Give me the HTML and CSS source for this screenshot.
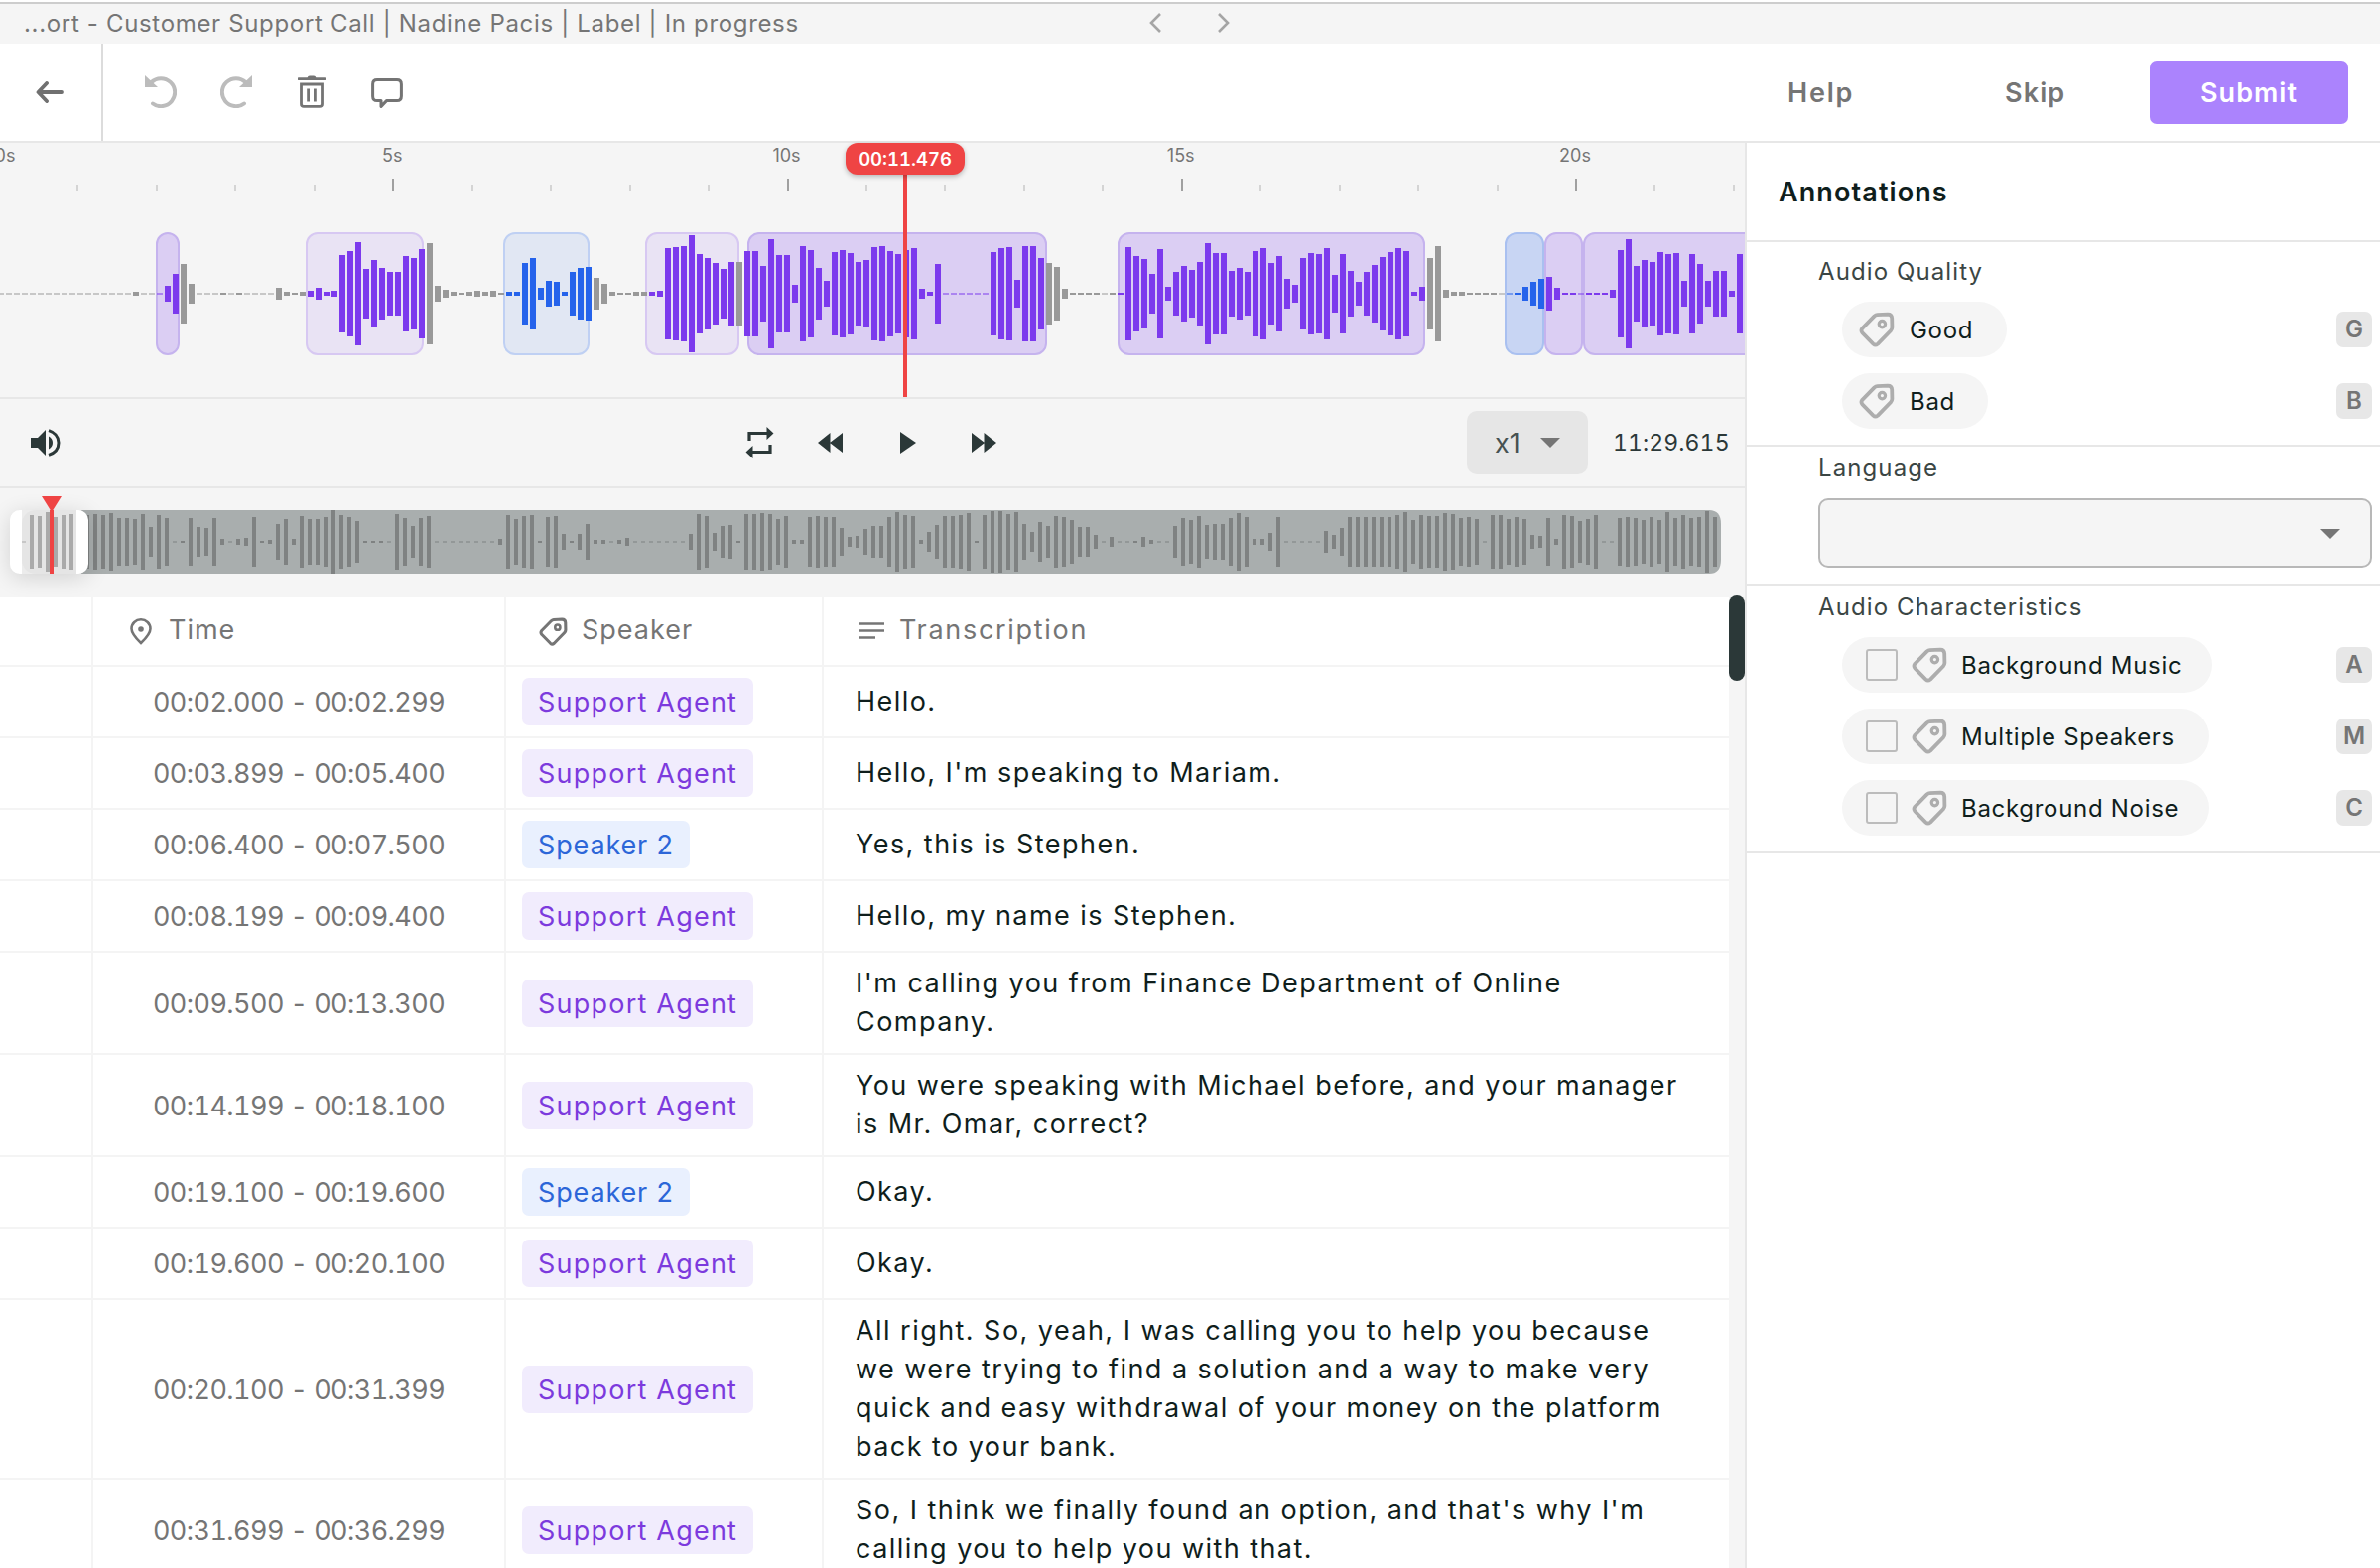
FILE: index.html
```html
<!DOCTYPE html>
<html lang="en">
  <head>
    <meta charset="utf-8" />
    <title>Customer Support Call</title>
    <link rel="stylesheet" href="styles.css">
  </head>
  <body>
    <svg class="symbols" width="0" height="0">
      <symbol id="tag" viewBox="0 0 36 36">
        <path d="M18.5 3.2 L29 2.6 Q33 2.6 33.2 6.5 L33.4 16 Q33.3 17.8 32 19.2 L19 32.6 Q16.6 34.6 14.4 32.6 L3.4 21.4 Q1.6 19 3.4 16.8 L15.6 4.4 Q16.9 3.3 18.5 3.2 Z" fill="none" stroke="currentColor" stroke-width="3.8" stroke-linejoin="round" />
        <circle cx="23.4" cy="12.6" r="3.2" fill="none" stroke="currentColor" stroke-width="3.2" />
      </symbol>
    </svg>

    <div class="titlebar">
      <span class="titlebar-text">...ort - Customer Support Call | Nadine Pacis | Label | In progress</span>
      <svg class="chevrons" width="86" height="24" viewBox="0 0 86 24">
        <path d="M13 3 L4 12 L13 21 M72 3 L81 12 L72 21" />
      </svg>
    </div>

    <header class="toolbar">
      <div class="back">
        <svg width="28" height="22" viewBox="0 0 28 22"><path d="M26 11 H3 M11 2 L2.5 11 L11 20" /></svg>
      </div>
      <div class="tools">
        <svg class="muted" width="32" height="33" viewBox="0 0 32 33">
          <path d="M8 28.5 A14 14 0 1 0 6.5 7" fill="none" stroke="currentColor" stroke-width="4" stroke-linecap="round" />
          <path d="M0 0 V12 H13 Z" fill="currentColor" />
        </svg>
        <svg class="muted" width="32" height="33" viewBox="0 0 32 33">
          <path d="M24 28.5 A14 14 0 1 1 25.5 7" fill="none" stroke="currentColor" stroke-width="4" stroke-linecap="round" />
          <path d="M32 0 V12 H19 Z" fill="currentColor" />
        </svg>
        <svg class="trash" width="28" height="33" viewBox="0 0 28 33">
          <path d="M1 3.6 H27 M3.5 9 H24.5 V29 Q24.5 31.4 22 31.4 H6 Q3.5 31.4 3.5 29 Z" fill="none" stroke="currentColor" stroke-width="2.8" stroke-linecap="round" />
          <path d="M9.5 3 Q10 0.6 12 0.6 H16 Q18 0.6 18.5 3 Z" fill="currentColor" />
          <path d="M10.6 13.5 V26.5 M17.4 13.5 V26.5" stroke="currentColor" stroke-width="2.8" />
        </svg>
        <svg class="comment" width="32" height="31" viewBox="0 0 32 31">
          <path d="M6 1.6 H26 Q30.4 1.6 30.4 6 V18 Q30.4 22.6 26 22.6 H15.5 L10 28.4 V22.6 H6 Q1.6 22.6 1.6 18 V6 Q1.6 1.6 6 1.6 Z" fill="none" stroke="currentColor" stroke-width="3" stroke-linejoin="round" />
        </svg>
      </div>
      <nav class="actions">
        <a class="link help">Help</a>
        <a class="link skip">Skip</a>
        <button class="submit">Submit</button>
      </nav>
    </header>

    <div class="content">
      <main class="editor">
        <section class="wave">
          <svg id="wave" width="1758" height="256"></svg>
          <div class="cursor-line"></div>
          <div class="cursor-time">00:11.476</div>
        </section>

        <section class="controls">
          <svg class="volume" width="30" height="28" viewBox="0 0 30 28">
            <path d="M0 9 H7 L15 1 V27 L7 19 H0 Z M18 7.4 Q22 9.6 22 14 Q22 18.4 18 20.6 Z" />
            <path d="M18 1.6 Q28 4.8 28 14 Q28 23.2 18 26.4" fill="none" stroke="#2b3838" stroke-width="3" />
          </svg>
          <div class="transport">
            <svg width="29" height="32" viewBox="0 0 29 32">
              <path d="M4 14 V6.5 H22 M25 18 V25.5 H7" fill="none" stroke="#2b3838" stroke-width="3.2" />
              <path d="M21.5 0 L28.5 6.5 L21.5 13 Z M7.5 19 L0.5 25.5 L7.5 32 Z" />
            </svg>
            <svg width="25" height="20" viewBox="0 0 25 20"><path d="M12.5 0 V20 L0 10 Z M25 0 V20 L12 10 Z" /></svg>
            <svg width="16" height="22" viewBox="0 0 16 22"><path d="M0 0 L16 11 L0 22 Z" /></svg>
            <svg width="25" height="20" viewBox="0 0 25 20"><path d="M0 0 L13 10 L0 20 Z M12.5 0 L25 10 L12.5 20 Z" /></svg>
          </div>
          <div class="speed">x1 <i class="caret"></i></div>
          <span class="duration">11:29.615</span>
        </section>

        <section class="overview">
          <svg id="overview" width="1758" height="110"></svg>
          <div class="window"><div class="window-marker"></div></div>
        </section>

        <section class="table">
          <div class="rows" id="rows">
            <div class="row head">
              <div class="cell"></div>
              <div class="cell">
                <svg class="pin" width="22" height="27" viewBox="0 0 22 27">
                  <path d="M11 25 Q1.5 16 1.5 10.5 A9.5 9.2 0 0 1 20.5 10.5 Q20.5 16 11 25 Z" fill="none" stroke="currentColor" stroke-width="2.6" />
                  <circle cx="11" cy="11" r="2.8" fill="currentColor" />
                </svg>
                <span class="head-time">Time</span>
              </div>
              <div class="cell">
                <svg class="head-tag" width="29" height="29"><use href="#tag" /></svg>
                <span class="head-speaker">Speaker</span>
              </div>
              <div class="cell">
                <svg class="lines" width="25" height="18" viewBox="0 0 25 18"><path d="M0 1.5 H25 M0 8.5 H25 M0 15.5 H16" stroke="currentColor" stroke-width="2.6" /></svg>
                <span class="head-text">Transcription</span>
              </div>
            </div>
          </div>
          <div class="scroll"><div class="thumb"></div></div>
        </section>
      </main>

      <aside class="panel">
        <h2>Annotations</h2>
        <section class="group">
          <h3 class="quality">Audio Quality</h3>
          <div class="option"><label class="pill"><svg width="36" height="36"><use href="#tag" /></svg><span>Good</span></label><kbd>G</kbd></div>
          <div class="option"><label class="pill bad"><svg width="36" height="36"><use href="#tag" /></svg><span>Bad</span></label><kbd>B</kbd></div>
        </section>
        <section class="group">
          <h3>Language</h3>
          <div class="select"><i class="caret"></i></div>
        </section>
        <section class="group">
          <h3>Audio Characteristics</h3>
          <div class="option"><label class="pill check wide"><i class="box"></i><svg width="36" height="36"><use href="#tag" /></svg><span>Background Music</span></label><kbd>A</kbd></div>
          <div class="option"><label class="pill check"><i class="box"></i><svg width="36" height="36"><use href="#tag" /></svg><span>Multiple Speakers</span></label><kbd>M</kbd></div>
          <div class="option"><label class="pill check"><i class="box"></i><svg width="36" height="36"><use href="#tag" /></svg><span>Background Noise</span></label><kbd>C</kbd></div>
        </section>
      </aside>
    </div>

    <script>
      // peak heights in px, one bar every 8px
      const wavePeaks = [
        1,1,1,1,1,1,1,1,1,1,1,1,1,1,1,1,1,4,1,1,1,16,40,60,20,1,1,1,2,1,2,1,1,1,1,12,4,2,4,
        6,12,4,6,78,86,104,50,68,52,44,44,76,72,90,102,16,8,4,2,4,6,4,6,2,4,4,62,72,12,26,24,4,44,52,54,32,
        20,4,2,2,4,4,4,6,92,94,96,118,80,72,62,50,64,64,86,86,56,110,78,78,18,96,88,52,26,84,88,82,64,68,94,96,86,80,88,92,
        10,4,60,1,1,1,1,1,1,84,92,94,28,96,96,72,62,54,10,2,2,2,2,1,2,2,94,76,70,40,90,14,44,56,48,64,102,82,82,46,52,44,
        86,92,62,76,30,18,72,82,80,92,38,80,46,24,44,58,74,84,92,86,4,14,72,96,8,4,4,2,2,2,2,1,1,2,14,24,30,34,12,2,2,1,2,2,2,
        8,88,110,56,68,64,84,80,82,26,80,60,26,46,46,6,80
      ];
      const overviewPeaks = [
        1,54,52,60,50,54,56,54,54,56,54,58,48,48,46,56,30,54,48,1,2,48,30,28,48,6,1,6,8,50,2,4,36,46,6,52,46,46,50,64,54,50,42,
        2,2,2,1,56,48,32,48,52,1,1,1,1,1,1,1,1,6,54,46,52,54,2,50,52,16,2,16,36,4,4,1,4,8,1,1,1,1,1,1,1,16,56,52,18,32,34,2,56,
        56,58,56,46,52,4,4,50,52,50,50,28,10,12,26,32,32,50,60,54,52,4,20,34,52,52,54,58,2,54,62,62,56,60,36,20,40,32,52,50,44,
        30,30,14,1,10,1,1,2,10,4,1,1,32,48,44,52,34,36,36,48,58,50,6,6,18,50,1,1,1,1,1,22,14,28,50,50,50,50,50,50,54,60,44,54,
        52,52,58,56,48,50,46,1,54,54,46,50,46,14,12,48,6,54,52,42,46,54,1,1,48,50,48,44,50,44,60,48,54,48,50,62,50
      ];
      const agentBars = [[20, 22], [39, 53], [82, 92], [94, 131], [141, 179], [195, 219]];
      const speakerBars = [[64, 74], [190, 194]];
      // [x, width, fill, border]
      const regions = [
        [158, 22, "#dbcef3", "#c5b3ee"],
        [309, 117, "#e9e3f4", "#d7c8f2"],
        [508, 85, "#e1e7f3", "#bfd0f3"],
        [651, 93, "#e9e3f4", "#d7c8f2"],
        [754, 300, "#dbcef3", "#c5b3ee"],
        [1127, 308, "#dbcef3", "#c5b3ee"],
        [1517, 38, "#c8d5f3", "#a9c0f0"],
        [1557, 37, "#dbcef3", "#c5b3ee"],
        [1596, 200, "#dbcef3", "#c5b3ee"],
      ];
      const rows = [
        ["00:02.000 - 00:02.299", 1, "Hello."],
        ["00:03.899 - 00:05.400", 1, "Hello, I'm speaking to Mariam."],
        ["00:06.400 - 00:07.500", 2, "Yes, this is Stephen."],
        ["00:08.199 - 00:09.400", 1, "Hello, my name is Stephen."],
        ["00:09.500 - 00:13.300", 1, "I'm calling you from Finance Department of Online<br>Company."],
        ["00:14.199 - 00:18.100", 1, "You were speaking with Michael before, and your manager<br>is Mr. Omar, correct?"],
        ["00:19.100 - 00:19.600", 2, "Okay."],
        ["00:19.600 - 00:20.100", 1, "Okay."],
        ["00:20.100 - 00:31.399", 1, "All right. So, yeah, I was calling you to help you because<br>we were trying to find a solution and a way to make very<br>quick and easy withdrawal of your money on the platform<br>back to your bank."],
        ["00:31.699 - 00:36.299", 1, "So, I think we finally found an option, and that's why I'm<br>calling you to help you with that."],
      ];

      const inRuns = (runs, i) => runs.some(([from, to]) => i >= from && i <= to);
      const rect = (x, y, w, h, fill) =>
        `<rect x="${x}" y="${y}" width="${w}" height="${h}" fill="${fill}"/>`;

      // ruler: a tick each second, a label each five
      let svg = "";
      for (let s = 1; s <= 22; s++) {
        const x = Math.round(79.45 * s - 2);
        svg += s % 5 ? rect(x, 42, 2, 6, "#d4d4d4") : rect(x, 36, 2, 12, "#a0a0a0");
      }
      for (let s = 0; s <= 20; s += 5) {
        svg += `<text class="ruler" x="${s ? 79.45 * s - 2 : 5}" y="19">${s}s</text>`;
      }
      regions.forEach(([x, w, fill, border]) => {
        svg += `<rect x="${x}" y="91" width="${w}" height="122" rx="${Math.min(11, w / 2)}" fill="${fill}" stroke="${border}" stroke-width="2"/>`;
      });
      wavePeaks.forEach((h, i) => {
        const fill = inRuns(agentBars, i) ? "#7c3aed" : inRuns(speakerBars, i) ? "#2563eb" : "#999";
        svg += rect(8 * i - 2, 152 - h / 2, 6, h, fill);
      });
      document.getElementById("wave").innerHTML = svg;

      svg = `<path d="M50 22 H1722 Q1734 22 1734 36 V72 Q1734 86 1722 86 H50 Z" fill="#a9aeae"/>`;
      svg += `<rect x="18" y="22" width="64" height="64" fill="#ececec"/><rect x="22" y="22" width="80" height="64" rx="14" fill="#e5e5e5"/>`;
      svg += rect(82, 22, 30, 64, "#a9aeae");
      overviewPeaks.forEach((h, i) => {
        svg += rect(22 + 8 * i, 54 - h / 2, 4, h, i < 8 ? "#aaa" : "#7f8282");
      });
      document.getElementById("overview").innerHTML = svg;

      rows.forEach(([time, speaker, text]) => {
        const row = document.createElement("div");
        row.className = "row";
        row.innerHTML = `
          <div class="cell"></div>
          <div class="cell time">${time}</div>
          <div class="cell speaker"><span class="chip chip-${speaker}">${speaker === 1 ? "Support Agent" : "Speaker 2"}</span></div>
          <div class="cell text"><p>${text}</p></div>`;
        document.getElementById("rows").appendChild(row);
      });
    </script>
  </body>
</html>
```
FILE: styles.css
```css
* {
  box-sizing: border-box;
}
body {
  margin: 0;
  width: 2398px;
  height: 1580px;
  overflow: hidden;
  display: flex;
  flex-direction: column;
  background: #fff;
  color: #0f1e1c;
  font-family: Inter, "Open Sans", sans-serif;
  font-size: 27px;
}
svg {
  display: block;
  flex: none;
}
.symbols {
  position: absolute;
}
.titlebar {
  height: 44px;
  flex: none;
  padding: 0 24px;
  border-top: 2px solid #fff;
  box-shadow: inset 0 2px #cdcdcd;
  background: #f5f5f5;
  display: flex;
  align-items: center;
  color: #757575;
  font-size: 24px;
}
.titlebar-text {
  width: 1132px;
  letter-spacing: 0.67px;
}
.chevrons path {
  fill: none;
  stroke: #a5a5a5;
  stroke-width: 2.6;
}
.toolbar {
  height: 100px;
  flex: none;
  display: flex;
  border-bottom: 2px solid #e7e7e7;
}
.back {
  width: 104px;
  border-right: 2px solid #dcdcdc;
  padding: 38px 0 0 36px;
}
.back path {
  fill: none;
  stroke: #707070;
  stroke-width: 3.8;
  stroke-linecap: round;
  stroke-linejoin: round;
}
.tools {
  display: flex;
  gap: 44px;
  padding: 32px 0 0 42px;
  color: #747474;
}
.muted {
  color: #bcbcbc;
}
.trash {
  margin-left: 2px;
}
.comment {
  margin: 3px 0 0 2px;
}
.actions {
  margin-left: auto;
  padding-right: 32px;
  display: flex;
  align-items: center;
}
.link {
  color: #757575;
  font-weight: 600;
  letter-spacing: 1.1px;
}
.help {
  width: 219px;
  letter-spacing: 1.8px;
}
.skip {
  width: 146px;
}
.submit {
  width: 200px;
  height: 64px;
  border: 0;
  border-radius: 7px;
  background: #ab83fd;
  color: #fff;
  font: 600 27px Inter, sans-serif;
  letter-spacing: 1px;
}
.content {
  flex: 1;
  min-height: 0;
  display: flex;
}
.editor {
  width: 1760px;
  flex: none;
  border-right: 2px solid #e7e7e7;
  background: #f5f5f5;
}
.wave {
  position: relative;
  height: 258px;
  border-bottom: 2px solid #e7e7e7;
}
.ruler {
  fill: #757575;
  font-size: 18px;
  text-anchor: middle;
}
.cursor-line {
  position: absolute;
  left: 910px;
  top: 20px;
  width: 4px;
  height: 236px;
  background: #ef4444;
}
.cursor-time {
  position: absolute;
  left: 852px;
  top: 0;
  width: 120px;
  height: 32px;
  border-radius: 12px;
  background: #ef4444;
  box-shadow: 0 2px 5px rgba(0, 0, 0, 0.25);
  color: #fff;
  font-size: 18.5px;
  font-weight: 600;
  font-variant-numeric: tabular-nums;
  line-height: 33px;
  text-align: center;
}
.controls {
  height: 90px;
  border-bottom: 2px solid #e7e7e7;
  display: flex;
  align-items: center;
  padding-left: 31px;
  fill: #2b3838;
}
.volume {
  margin-right: 690px;
}
.transport {
  display: flex;
  align-items: center;
  width: 727px;
}
.transport svg:nth-child(2) {
  margin-left: 44px;
}
.transport svg:nth-child(3) {
  margin-left: 58px;
}
.transport svg:nth-child(4) {
  margin-left: 56px;
}
.speed {
  width: 122px;
  height: 64px;
  border-radius: 10px;
  background: #e6e6e6;
  display: flex;
  align-items: center;
  justify-content: space-between;
  padding: 0 28px 0 28px;
  color: #475252;
}
.caret {
  border: 10px solid transparent;
  border-top-color: #757575;
  border-bottom: 0;
}
.duration {
  margin-left: 25px;
  color: #2b3838;
  font-size: 23px;
  font-variant-numeric: tabular-nums;
  letter-spacing: 0.1px;
}
.overview {
  position: relative;
  height: 110px;
}
.window {
  position: absolute;
  left: 10px;
  top: 22px;
  width: 79px;
  height: 64px;
  border: solid #fff;
  border-width: 0 12px;
  border-radius: 10px;
  box-shadow: 0 4px 22px rgba(0, 0, 0, 0.14);
}
.window-marker {
  position: absolute;
  left: 28px;
  top: 0;
  width: 4px;
  height: 64px;
  background: #ef4444;
}
.window-marker::before {
  content: "";
  position: absolute;
  left: -8px;
  top: -14px;
  border: 10px solid transparent;
  border-top: 16px solid #ef4444;
  border-bottom: 0;
}
.table {
  display: flex;
}
.rows {
  width: 1742px;
}
.row {
  display: grid;
  grid-template-columns: 94px 416px 320px 1fr;
  min-height: 72px;
  border-bottom: 2px solid #f4f4f4;
  background: #fff;
}
.row.head {
  height: 70px;
  min-height: 0;
  color: #757575;
}
.cell {
  display: flex;
  align-items: center;
  border-right: 2px solid #f4f4f4;
}
.cell:last-child {
  border-right: 0;
}
.head span {
  padding-bottom: 3px;
}
.pin {
  margin: 0 17px 0 37px;
}
.head-time {
  letter-spacing: 1px;
}
.head-tag {
  margin: 0 14px 0 33px;
}
.head-speaker {
  letter-spacing: 1px;
}
.lines {
  margin: 0 15px 0 36px;
}
.head-text {
  letter-spacing: 1.7px;
}
.time {
  justify-content: center;
  padding-top: 1px;
  color: #757575;
  font-variant-numeric: tabular-nums;
  letter-spacing: -0.57px;
}
.speaker {
  padding-left: 16px;
}
.chip {
  height: 48px;
  padding: 0 16px;
  border-radius: 7px;
  line-height: 49px;
  letter-spacing: 1.22px;
}
.chip-1 {
  background: #f1ecfd;
  color: #7c3add;
}
.chip-2 {
  background: #e9f0fe;
  color: #2c66d8;
  letter-spacing: 0.85px;
}
.text {
  padding: 11px 0 12px 32px;
}
.text p {
  margin: 0;
  line-height: 39px;
  letter-spacing: 1.45px;
  white-space: nowrap;
}
.scroll {
  width: 16px;
}
.thumb {
  position: relative;
  top: -2px;
  height: 86px;
  border-radius: 8px;
  background: #2b3838;
}
.panel {
  flex: 1;
}
.panel h2 {
  height: 100px;
  margin: 0;
  padding-left: 32px;
  border-bottom: 2px solid #e7e7e7;
  font-size: 27px;
  font-weight: 600;
  line-height: 100px;
  letter-spacing: 1.1px;
}
.group {
  padding: 0 8px 16px 72px;
  border-bottom: 2px solid #e7e7e7;
}
.group h3 {
  margin: 0;
  height: 52px;
  color: #3b4644;
  font-size: 24px;
  font-weight: 400;
  line-height: 44px;
  letter-spacing: 1.1px;
}
.group h3.quality {
  height: 60px;
  line-height: 60px;
}
.option {
  height: 56px;
  display: flex;
  align-items: center;
  justify-content: space-between;
  padding-left: 24px;
}
.option + .option {
  margin-top: 16px;
}
.pill {
  height: 56px;
  width: 166px;
  padding-left: 17px;
  border-radius: 28px;
  background: #f5f5f5;
  display: flex;
  align-items: center;
  font-size: 24px;
  letter-spacing: 0.7px;
}
.pill svg {
  color: #adadad;
  margin-right: 15px;
}
.pill.bad {
  width: 147px;
}
.pill.check {
  width: 370px;
  padding-left: 24px;
}
.pill.wide {
  width: 373px;
}
.box {
  width: 32px;
  height: 32px;
  margin-right: 14px;
  border: 2px solid #bcbcbc;
  border-radius: 3px;
}
.check svg {
  margin-right: 14px;
}
kbd {
  width: 36px;
  height: 36px;
  border-radius: 7px;
  background: #e7e7e7;
  color: #757575;
  font: 600 24px/36px Inter, sans-serif;
  text-align: center;
}
.select {
  height: 70px;
  border: 2px solid #b8b8b8;
  border-radius: 10px;
  background: #f5f5f5;
  display: flex;
  align-items: center;
  justify-content: flex-end;
  padding: 2px 30px 0 0;
}
```
